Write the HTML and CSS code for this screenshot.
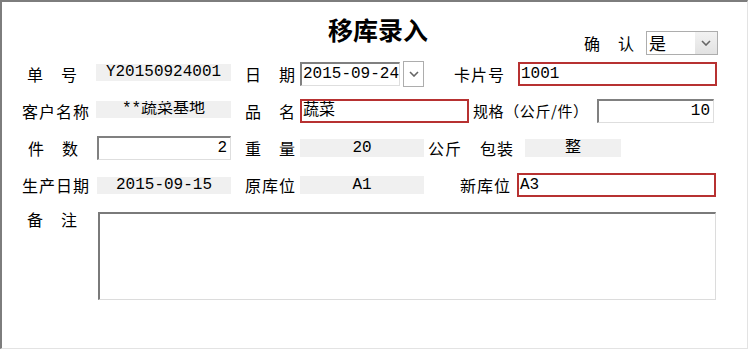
FILE: index.html
```html
<!DOCTYPE html>
<html lang="zh-CN">
<head>
<meta charset="utf-8">
<title>移库录入</title>
<link rel="stylesheet" href="styles.css">
</head>
<body>
<div class="frame">
  <div class="header">
    <div class="title">移库录入</div>
    <div class="confirm">
      <span class="lbl w51">确　认</span>
      <div class="select">
        <span class="select-val">是</span>
        <span class="select-arrow"><svg width="10" height="6" viewBox="0 0 10 6"><path d="M1 1 L5 5 L9 1" fill="none" stroke="#666" stroke-width="1.6"/></svg></span>
      </div>
    </div>
  </div>
  <div class="form">
    <div class="row">
      <span class="lbl w68 in5">单　号</span>
      <span class="field f1 ml6">Y20150924001</span>
      <span class="lbl w51 ml14">日　期</span>
      <span class="box inset date ml4">2015-09-24</span>
      <span class="dbtn ml3"><svg width="10" height="6" viewBox="0 0 10 6"><path d="M1 1 L5 5 L9 1" fill="none" stroke="#666" stroke-width="1.6"/></svg></span>
      <span class="lbl w51 ml30">卡片号</span>
      <span class="box red w199 ml13">1001</span>
    </div>
    <div class="row">
      <span class="lbl w68">客户名称</span>
      <span class="field f1 ml6">**蔬菜基地</span>
      <span class="lbl w51 ml14">品　名</span>
      <span class="box red w169 ml4">蔬菜</span>
      <span class="lbl spec ml4">规格（公斤/件）</span>
      <span class="box inset w117 num ml4">10</span>
    </div>
    <div class="row">
      <span class="lbl w68 in6">件　数</span>
      <span class="box inset w134 num ml7">2</span>
      <span class="lbl w51 ml14">重　量</span>
      <span class="field f2 ml4">20</span>
      <span class="lbl w34 ml4">公斤</span>
      <span class="lbl w34 ml18">包装</span>
      <span class="field f3 ml11">整</span>
    </div>
    <div class="row">
      <span class="lbl w68">生产日期</span>
      <span class="field f4 ml7">2015-09-15</span>
      <span class="lbl w51 ml14">原库位</span>
      <span class="field f2 ml4">A1</span>
      <span class="lbl w51 ml36">新库位</span>
      <span class="box red w199 ml6">A3</span>
    </div>
    <div class="row notes">
      <span class="lbl w68 in5">备　注</span>
      <div class="textarea ml8"></div>
    </div>
  </div>
</div>
</body>
</html>
```

FILE: styles.css
```css
* { box-sizing: border-box; }
body {
  margin: 0;
  background: #ffffff;
  font-family: "Noto Sans CJK SC", sans-serif;
  color: #000;
}
.frame {
  width: 748px;
  height: 349px;
  border-top: 2px solid #7d7d7d;
  border-left: 2px solid #7d7d7d;
  border-right: 1px solid #e3e3e3;
  border-bottom: 1px solid #e3e3e3;
  background: #fff;
}
.header {
  display: grid;
  height: 53px;
}
.title {
  grid-area: 1 / 1;
  align-self: start;
  margin-top: 14px;
  padding-left: 7px;
  text-align: center;
  font-size: 25px;
  line-height: 26px;
  font-weight: 700;
}
.confirm {
  grid-area: 1 / 1;
  justify-self: end;
  align-self: end;
  margin-right: 29px;
  display: flex;
  align-items: center;
  gap: 11px;
}
.select {
  width: 72px;
  height: 24px;
  border: 1px solid #adadad;
  display: flex;
  background: #fff;
}
.select-val {
  flex: 1;
  padding-left: 2px;
  font-size: 17px;
  line-height: 22px;
}
.select-arrow {
  width: 22px;
  background: linear-gradient(#f2f2f2, #e2e2e2);
  display: flex;
  align-items: center;
  justify-content: center;
}
.form {
  margin-top: 7px;
  padding-left: 20px;
  display: flex;
  flex-direction: column;
  gap: 13px;
}
.row {
  display: flex;
  align-items: center;
  height: 24px;
}
.row.notes {
  align-items: flex-start;
  height: 88px;
  margin-top: 2px;
}
.lbl {
  font-size: 16px;
  letter-spacing: 1px;
  line-height: 20px;
  white-space: nowrap;
  flex: none;
}
.notes .lbl { margin-top: -3px; }
.w68 { width: 68px; }
.w51 { width: 51px; }
.w34 { width: 34px; }
.in5 { padding-left: 5px; }
.in6 { padding-left: 6px; }
.spec { width: 120px; font-size: 15px; letter-spacing: 0.6px; }
.ml3 { margin-left: 3px; }
.ml4 { margin-left: 4px; }
.ml6 { margin-left: 6px; }
.ml7 { margin-left: 7px; }
.ml8 { margin-left: 8px; }
.ml11 { margin-left: 11px; }
.ml13 { margin-left: 13px; }
.ml14 { margin-left: 14px; }
.ml18 { margin-left: 18px; }
.ml30 { margin-left: 30px; }
.ml36 { margin-left: 36px; }
.field {
  flex: none;
  background: #f0f0f0;
  text-align: center;
  font-family: "Liberation Mono", "Noto Sans CJK SC", monospace;
  font-size: 16px;
  line-height: 17px;
  height: 17px;
  white-space: nowrap;
  overflow: hidden;
}
.f1 { width: 135px; margin-top: -3px; }
.f2 { width: 124px; height: 18px; line-height: 18px; }
.f3 { width: 96px; height: 18px; line-height: 18px; }
.f4 { width: 134px; }
.box {
  flex: none;
  height: 24px;
  font-family: "Liberation Mono", "Noto Sans CJK SC", monospace;
  font-size: 16px;
  line-height: 20px;
  padding: 0 1px;
  white-space: nowrap;
  overflow: hidden;
  background: #fff;
}
.inset {
  border-top: 2px solid #808080;
  border-left: 2px solid #808080;
  border-right: 1px solid #dedede;
  border-bottom: 1px solid #dedede;
}
.red {
  border: 2px solid #b73131;
  line-height: 20px;
}
.date { width: 100px; line-height: 21px; }
.num { text-align: right; padding-right: 3px; line-height: 21px; }
.w199 { width: 199px; }
.w169 { width: 169px; }
.w117 { width: 117px; }
.w134 { width: 134px; }
.dbtn {
  flex: none;
  width: 21px;
  height: 26px;
  border: 1px solid #adadad;
  display: flex;
  align-items: center;
  justify-content: center;
  background: #fff;
}
.textarea {
  flex: none;
  width: 618px;
  height: 88px;
  border-top: 2px solid #7a7a7a;
  border-left: 2px solid #7a7a7a;
  border-right: 1px solid #dcdcdc;
  border-bottom: 1px solid #dcdcdc;
  background: #fff;
}
```
